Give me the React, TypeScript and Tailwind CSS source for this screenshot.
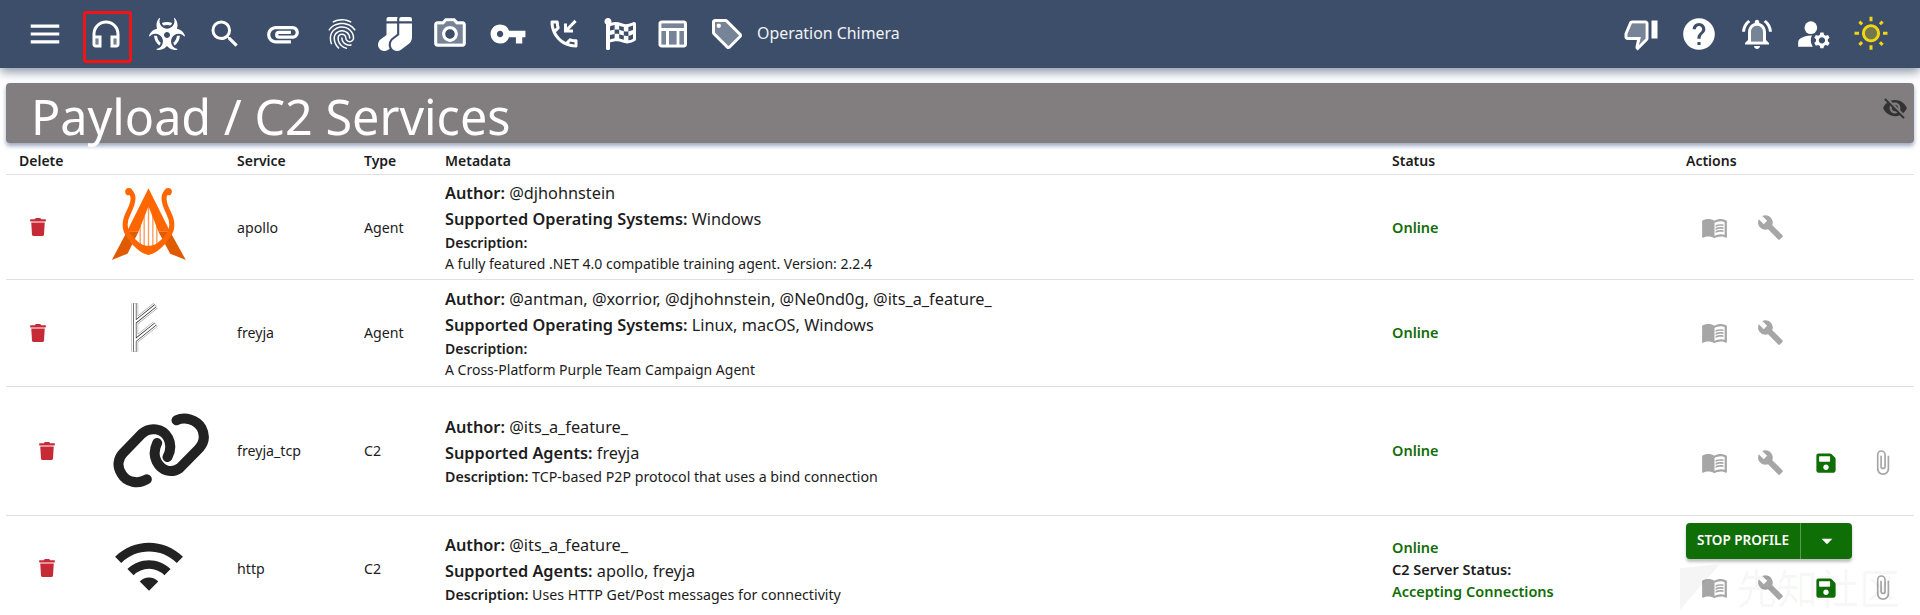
import React from "react";
import { MdMenu, MdSearch, MdAttachment, MdFingerprint, MdVpnKey, MdOutlinePhoneCallback, MdHelp, MdManageAccounts, MdVisibilityOff, MdMenuBook, MdBuild, MdOutlineAttachFile, MdArrowDropDown, MdWifi } from "react-icons/md";
import { FaBiohazard, FaSocks, FaFlagCheckered, FaTrash, FaSave } from "react-icons/fa";

type TT = { o: string; d: string; extra?: React.ReactNode };
function TwoTone({ o, d, extra, className }: TT & { className?: string }) {
  return (
    <svg viewBox="0 0 24 24" fill="currentColor" className={className}>
      <path opacity={0.3} d={o} />
      <path d={d} />
      {extra}
    </svg>
  );
}

const headset: TT = { o: "M5 15h2v4H5zm12 0h2v4h-2z", d: "M12 3a9 9 0 0 0-9 9v7c0 1.1.9 2 2 2h4v-8H5v-1c0-3.87 3.13-7 7-7s7 3.13 7 7v1h-4v8h4c1.1 0 2-.9 2-2v-7a9 9 0 0 0-9-9zM7 15v4H5v-4h2zm12 4h-2v-4h2v4z" };
const camera: TT = { o: "M20 6h-4.05l-1.83-2H9.88L8.05 6H4v12h16V6zm-8 11c-2.76 0-5-2.24-5-5s2.24-5 5-5 5 2.24 5 5-2.24 5-5 5z", d: "M20 4h-3.17L15 2H9L7.17 4H4c-1.1 0-2 .9-2 2v12c0 1.1.9 2 2 2h16c1.1 0 2-.9 2-2V6c0-1.1-.9-2-2-2zm0 14H4V6h4.05l1.83-2h4.24l1.83 2H20v12zM12 7c-2.76 0-5 2.24-5 5s2.24 5 5 5 5-2.24 5-5-2.24-5-5-5zm0 8c-1.65 0-3-1.35-3-3s1.35-3 3-3 3 1.35 3 3-1.35 3-3 3z" };
const table: TT = { o: "M5 5h15v3H5zM5 10h3v9H5zM10 10h5v9h-5zM17 10h3v9h-3z", d: "M20 3H5c-1.1 0-2 .9-2 2v14c0 1.1.9 2 2 2h15c1.1 0 2-.9 2-2V5c0-1.1-.9-2-2-2zm0 2v3H5V5h15zm-5 14h-5v-9h5v9zM5 10h3v9H5v-9zm12 9v-9h3v9h-3z" };
const tag: TT = { o: "M11 4H4v7l9 9.01L20 13l-9-9zM6.5 8C5.67 8 5 7.33 5 6.5S5.67 5 6.5 5 8 5.67 8 6.5 7.33 8 6.5 8z", d: "M21.41 11.58l-9-9C12.05 2.22 11.55 2 11 2H4c-1.1 0-2 .9-2 2v7c0 .55.22 1.05.59 1.42l9 9c.36.36.86.58 1.41.58s1.05-.22 1.41-.59l7-7c.37-.36.59-.86.59-1.41s-.23-1.06-.59-1.42zM13 20.01L4 11V4h7v-.01l9 9-7 7.02z", extra: <circle cx="6.5" cy="6.5" r="1.5" /> };
const thumb: TT = { o: "M3 12v2h9l-1.34 5.34L15 15V5H6z", d: "M15 3H6c-.83 0-1.54.5-1.84 1.22l-3.02 7.05c-.09.23-.14.47-.14.73v2c0 1.1.9 2 2 2h6.31l-.95 4.57-.03.32c0 .41.17.79.44 1.06L9.83 23l6.59-6.59c.36-.36.58-.86.58-1.41V5c0-1.1-.9-2-2-2zm0 12l-4.34 4.34L12 14H3v-2l3-7h9v10zm4-12h4v12h-4z" };
const bell: TT = { o: "M12 6.5c-2.49 0-4 2.02-4 4.5v6h8v-6c0-2.48-1.51-4.5-4-4.5z", d: "M12 22c1.1 0 2-.9 2-2h-4c0 1.1.9 2 2 2zm6-6v-5c0-3.07-1.63-5.64-4.5-6.32V4c0-.83-.67-1.5-1.5-1.5s-1.5.67-1.5 1.5v.68C7.64 5.36 6 7.92 6 11v5l-2 2v1h16v-1l-2-2zm-2 1H8v-6c0-2.48 1.51-4.5 4-4.5s4 2.02 4 4.5v6zM7.58 4.08L6.15 2.65C3.75 4.48 2.17 7.3 2.03 10.5h2c.15-2.65 1.51-4.97 3.55-6.42zM19.97 10.5h2c-.15-3.2-1.73-6.02-4.12-7.85l-1.42 1.43c2.02 1.45 3.39 3.77 3.54 6.42z" };
const sun: TT = { o: "M12 7.5a4 4 0 1 0 0 8 4 4 0 0 0 0-8z", d: "M6.76 4.84l-1.8-1.79-1.41 1.41 1.79 1.79zM1 10.5h3v2H1zM11 .55h2V3.5h-2zm8.04 2.495l1.408 1.407-1.79 1.79-1.407-1.408zm-1.8 15.115l1.79 1.8 1.41-1.41-1.8-1.79zM20 10.5h3v2h-3zm-8-5c-3.31 0-6 2.69-6 6s2.69 6 6 6 6-2.69 6-6-2.69-6-6-6zm0 10c-2.21 0-4-1.79-4-4s1.79-4 4-4 4 1.79 4 4-1.79 4-4 4zm-1 4h2v2.95h-2zm-7.45-.96l1.41 1.41 1.79-1.8-1.41-1.41z" };

function ApolloLogo() {
  return (
    <svg viewBox="60 35 230 225" className="w-[77px] h-[75px]">
      <g stroke="#ff9a55" strokeWidth="4">
        <path d="M150 125V215M162 105V222M175 90V228M188 105V222M200 125V215" />
      </g>
      <path d="M175 42L240 172L205 172L175 96L145 172L110 172Z" fill="#ff6600" />
      <path d="M110 172L65 257L112 238L145 172Z M240 172L287 257L240 238L205 172Z" fill="#e05a00" />
      <path d="M116 50C136 60 130 85 115 115C100 145 102 165 115 183C130 203 155 222 175 230C195 222 220 203 235 183C248 165 250 145 235 115C220 85 214 60 234 50" fill="none" stroke="#ff6600" strokeWidth="15" />
      <path d="M122 190C140 208 160 214 175 214C190 214 210 208 228 190L232 200C215 222 195 238 175 242C155 238 135 222 118 200Z" fill="#ff6600" />
      <circle cx="116" cy="52" r="11" fill="#ff6600" />
      <circle cx="234" cy="52" r="11" fill="#ff6600" />
    </svg>
  );
}

function FreyjaLogo() {
  const d = "M135 385V530M135 442L197 392M135 497L197 447";
  return (
    <svg viewBox="118 372 95 168" className="w-[32px] h-[56px]" fill="none">
      <path d={d} stroke="#999" strokeWidth="20" />
      <path d={d} stroke="#fff" strokeWidth="17" />
      <path d={d} stroke="#333" strokeWidth="10" />
      <path d={d} stroke="#fff" strokeWidth="6" />
    </svg>
  );
}

function LinkLogo() {
  return (
    <svg viewBox="340 80 290 225" className="w-[97px] h-[75px]" fill="none" stroke="#222" strokeWidth="30" strokeLinecap="round">
      <path d="M441 279C415 295 380 288 365 262C350 240 355 215 370 200L425 143C450 120 490 125 505 155C515 175 512 195 503 212" />
      <path d="M530 102C555 90 590 100 605 125C618 150 612 170 597 187L540 245C515 262 485 255 470 225C460 205 465 185 472 170" />
    </svg>
  );
}

function Nav({ w, children, boxed }: { w: string; children: React.ReactNode; boxed?: boolean }) {
  return (
    <div className={`${w} h-full flex items-center justify-center shrink-0 relative`}>
      {children}
      {boxed && <div className="absolute left-[8px] top-[11px] w-[49px] h-[52px] border-[3px] border-[#f01414] rounded-[3px]" />}
    </div>
  );
}

function Act({ icon, muted }: { icon: React.ReactNode; muted?: boolean }) {
  return <div className={`w-[56px] h-[40px] flex items-center justify-center shrink-0 ${muted ? "text-[#a6a6a6]" : "text-[#0f6e06]"}`}>{icon}</div>;
}

function Actions({ full }: { full?: boolean }) {
  return (
    <div className="flex">
      <Act muted icon={<MdMenuBook className="w-[27px] h-[27px]" />} />
      <Act muted icon={<MdBuild className="w-[27px] h-[27px]" />} />
      {full && <Act icon={<FaSave className="w-[22px] h-[22px]" />} />}
      {full && <Act muted icon={<MdOutlineAttachFile className="w-[27px] h-[27px]" />} />}
    </div>
  );
}

function Meta({ author, label, value, desc, inline }: { author: string; label: string; value: string; desc: string; inline?: boolean }) {
  return (
    <div>
      <div className="text-[16.3px] leading-[26px]"><b className="font-semibold">Author:</b> {author}</div>
      <div className="text-[16.3px] leading-[26px]"><b className="font-semibold">{label}:</b> {value}</div>
      {inline ? (
        <div className="text-[14.2px] leading-[21px]"><b className="font-semibold">Description:</b> {desc}</div>
      ) : (
        <>
          <div className="text-[14px] leading-[21px] font-semibold">Description:</div>
          <div className="text-[14px] leading-[21px]">{desc}</div>
        </>
      )}
    </div>
  );
}

const Online = () => <div className="text-[#0f6e06] font-semibold text-[14.5px] leading-[22px]">Online</div>;

const trash = <FaTrash className="w-[16px] h-[18px] text-[#c62a37]" />;

export default function App() {
  return (
    <div className="relative h-[615px] overflow-hidden bg-white text-[#1c1c1c] font-['Noto_Sans','Open_Sans',sans-serif]">
      <header className="h-[68px] bg-[#3d4e6a] text-white flex items-center pl-[14px] pr-[20px] shadow-[0_4px_10px_rgba(61,78,106,0.6)]">
        <Nav w="w-[61px]"><MdMenu className="w-[38px] h-[38px]" /></Nav>
        <Nav w="w-[62px]" boxed><TwoTone {...headset} className="w-[36px] h-[36px]" /></Nav>
        <Nav w="w-[60px]"><FaBiohazard className="w-[36px] h-[34px]" /></Nav>
        <Nav w="w-[56px]"><MdSearch className="w-[36px] h-[36px]" /></Nav>
        <Nav w="w-[60px]"><MdAttachment className="w-[38px] h-[38px]" /></Nav>
        <Nav w="w-[58px]"><MdFingerprint className="w-[36px] h-[36px]" /></Nav>
        <Nav w="w-[48px]"><FaSocks className="w-[34px] h-[34px]" /></Nav>
        <Nav w="w-[62px]"><TwoTone {...camera} className="w-[38px] h-[38px]" /></Nav>
        <Nav w="w-[54px]"><MdVpnKey className="w-[38px] h-[38px]" /></Nav>
        <Nav w="w-[58px]"><MdOutlinePhoneCallback className="w-[36px] h-[36px]" /></Nav>
        <Nav w="w-[54px]"><FaFlagCheckered className="w-[32px] h-[32px]" /></Nav>
        <Nav w="w-[50px]"><TwoTone {...table} className="w-[36px] h-[36px]" /></Nav>
        <Nav w="w-[60px]"><TwoTone {...tag} className="w-[36px] h-[36px]" /></Nav>
        <span className="text-[15.9px] text-[#f0f2f5]">Operation Chimera</span>
        <div className="ml-auto flex h-full">
          <Nav w="w-[57px]"><TwoTone {...thumb} className="w-[36px] h-[36px]" /></Nav>
          <Nav w="w-[59px]"><MdHelp className="w-[38px] h-[38px]" /></Nav>
          <Nav w="w-[57px]"><TwoTone {...bell} className="w-[36px] h-[36px]" /></Nav>
          <Nav w="w-[57px]"><MdManageAccounts className="w-[38px] h-[38px]" /></Nav>
          <Nav w="w-[58px]"><span className="text-[#f2d60f]"><TwoTone {...sun} className="w-[36px] h-[36px]" /></span></Nav>
        </div>
      </header>

      <div className="mx-[6px] mt-[15px] h-[60px] bg-[#827d7e] rounded-[4px] shadow-[0_3px_4px_rgba(90,110,150,0.6)] flex items-center pl-[25px] relative">
        <h1 className="text-[48.5px] leading-[60px] text-white mt-[5px]">Payload / C2 Services</h1>
        <MdVisibilityOff className="absolute right-[6px] top-[12px] w-[26px] h-[26px] text-[#333]" />
      </div>

      <table className="table-fixed border-collapse mx-[6px] w-[1908px] mt-px text-[14.2px]">
        <colgroup>
          <col className="w-[94px]" /><col className="w-[129px]" /><col className="w-[127px]" /><col className="w-[81px]" /><col className="w-[947px]" /><col className="w-[294px]" /><col className="w-[236px]" />
        </colgroup>
        <thead>
          <tr className="h-[30px] border-b border-[#e0e0e0] text-left text-[14px]">
            <th className="pl-[13px] pt-[4px] font-semibold">Delete</th>
            <th></th>
            <th className="pl-[8px] pt-[4px] font-semibold">Service</th>
            <th className="pl-[8px] pt-[4px] font-semibold">Type</th>
            <th className="pl-[8px] pt-[4px] font-semibold">Metadata</th>
            <th className="pl-[8px] pt-[4px] font-semibold">Status</th>
            <th className="pl-[8px] pt-[4px] font-semibold">Actions</th>
          </tr>
        </thead>
        <tbody>
          <tr className="h-[105px] border-b border-[#e0e0e0]">
            <td className="pl-[24px]">{trash}</td>
            <td><div className="flex ml-[10px] mb-[6px]"><ApolloLogo /></div></td>
            <td className="pl-[8px] pt-[2px]">apollo</td>
            <td className="pl-[8px] pt-[2px]">Agent</td>
            <td className="pl-[8px]"><Meta author="@djhohnstein" label="Supported Operating Systems" value="Windows" desc="A fully featured .NET 4.0 compatible training agent. Version: 2.2.4" /></td>
            <td className="pl-[8px]"><Online /></td>
            <td className="pl-[8px] pt-[2px]"><Actions /></td>
          </tr>
          <tr className="h-[107px] border-b border-[#e0e0e0]">
            <td className="pl-[24px]">{trash}</td>
            <td><div className="flex ml-[29px] mb-[12px]"><FreyjaLogo /></div></td>
            <td className="pl-[8px]">freyja</td>
            <td className="pl-[8px]">Agent</td>
            <td className="pl-[8px]"><Meta author="@antman, @xorrior, @djhohnstein, @Ne0nd0g, @its_a_feature_" label="Supported Operating Systems" value="Linux, macOS, Windows" desc="A Cross-Platform Purple Team Campaign Agent" /></td>
            <td className="pl-[8px] pb-[2px]"><Online /></td>
            <td className="pl-[8px]"><Actions /></td>
          </tr>
          <tr className="h-[129px] border-b border-[#e0e0e0]">
            <td className="pl-[33px]">{trash}</td>
            <td><div className="flex ml-[13px]"><LinkLogo /></div></td>
            <td className="pl-[8px]">freyja_tcp</td>
            <td className="pl-[8px]">C2</td>
            <td className="pl-[8px]"><Meta inline author="@its_a_feature_" label="Supported Agents" value="freyja" desc="TCP-based P2P protocol that uses a bind connection" /></td>
            <td className="pl-[8px] pb-[2px]"><Online /></td>
            <td className="pl-[8px] pt-[24px]"><Actions full /></td>
          </tr>
          <tr className="h-[106px]">
            <td className="pl-[33px]">{trash}</td>
            <td><div className="flex ml-[12px] mb-[4px]"><MdWifi className="w-[74px] h-[74px] text-[#222]" /></div></td>
            <td className="pl-[8px]">http</td>
            <td className="pl-[8px]">C2</td>
            <td className="pl-[8px]"><Meta inline author="@its_a_feature_" label="Supported Agents" value="apollo, freyja" desc="Uses HTTP Get/Post messages for connectivity" /></td>
            <td className="pl-[8px] pt-[1px] text-[14.5px]">
              <Online />
              <div className="font-semibold leading-[22px]">C2 Server Status:</div>
              <div className="text-[#0f6e06] font-semibold leading-[22px]">Accepting Connections</div>
            </td>
            <td className="pl-[8px] align-top pt-[7px]">
              <div className="w-[166px] h-[36px] rounded-[4px] bg-[#0f6e06] text-white flex shadow-[0_3px_3px_rgba(0,0,0,0.25)]">
                <div className="w-[115px] flex items-center justify-center text-[13.5px] font-semibold border-r border-[#5a9a55]">STOP PROFILE</div>
                <div className="flex-1 flex items-center justify-center"><MdArrowDropDown className="w-[26px] h-[26px]" /></div>
              </div>
              <div className="mt-[9px]"><Actions full /></div>
            </td>
          </tr>
        </tbody>
      </table>

      <div className="absolute left-[1680px] top-[564px] flex items-start gap-[16px] text-black/[0.04] pointer-events-none">
        <svg viewBox="0 0 40 46" className="w-[40px] h-[46px]" fill="currentColor"><path d="M0 46V4L40 0Z" /></svg>
        <span className="text-[41px] leading-[44px] font-['Noto_Sans_CJK_SC',sans-serif]">先知社区</span>
      </div>
    </div>
  );
}
